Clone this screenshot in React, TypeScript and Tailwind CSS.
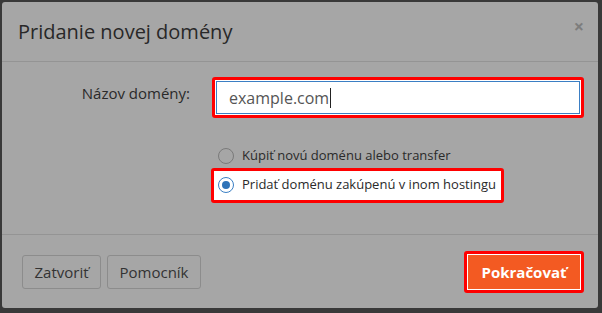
import React from "react";

const Radio = ({ checked }: { checked?: boolean }) => (
  <span
    className={`flex h-[16px] w-[16px] shrink-0 items-center justify-center rounded-full border ${
      checked ? "border-[#3b7fc4] bg-white" : "border-[#7a7a7a] bg-[#a6a6a6]"
    }`}
  >
    {checked && <span className="h-[8px] w-[8px] rounded-full bg-[#2f73b8]" />}
  </span>
);

const App = () => {
  return (
    <div
      className="h-[313px] w-[602px] bg-[#393939] pl-[2px] pt-[2px]"
      style={{ fontFamily: '"Open Sans", "Noto Sans", sans-serif' }}
    >
      <div className="flex h-[306px] w-[596px] flex-col rounded-[3px] bg-[#a6a6a6]">
        {/* HEADER */}
        <div className="flex h-[60px] items-center justify-between border-b border-[#949494] pl-[16px] pr-[14px]">
          <h1 className="text-[20px] text-[#282828]">Pridanie novej domény</h1>
          <span className="pb-[10px] text-[18px] font-bold text-[#7d7d7d]">×</span>
        </div>

        {/* BODY */}
        <div className="flex h-[173px] flex-col border-b border-[#949494] pt-[15px]">
          <div className="flex items-start">
            <label className="w-[188px] pt-[5px] text-right text-[15px] text-[#2a2a2a]">
              Názov domény:
            </label>
            <div className="ml-[22px] rounded-[3px] border-[3px] border-[#ff0000] bg-white p-[1px]">
              <div className="flex h-[33px] w-[364px] items-center border border-[#3b7fc4] bg-white pl-[12px] text-[16px] text-[#555]">
                example.com
                <span className="ml-[1px] h-[20px] w-px bg-[#222]" />
              </div>
            </div>
          </div>

          <div className="mt-[28px] flex flex-col pl-[209px]">
            <div className="flex items-center gap-[8px] whitespace-nowrap pl-[7px] text-[13px] text-[#2a2a2a]">
              <Radio />
              Kúpiť novú doménu alebo transfer
            </div>
            <div className="mt-[2px] w-[293px] rounded-[3px] border-[3px] border-[#ff0000] bg-white px-[1px] py-[1px]">
              <div className="flex h-[27px] items-center gap-[8px] whitespace-nowrap bg-white pl-[3px] text-[13px] text-[#2a2a2a]">
                <Radio checked />
                Pridať doménu zakúpenú v inom hostingu
              </div>
            </div>
          </div>
        </div>

        {/* FOOTER */}
        <div className="flex items-center justify-between pl-[20px] pr-[14px] pt-[16px]">
          <div className="flex gap-[6px]">
            <button className="h-[34px] w-[79px] rounded-[3px] border border-[#8c8c8c] text-[15px] text-[#333]">
              Zatvoriť
            </button>
            <button className="h-[34px] w-[94px] rounded-[3px] border border-[#8c8c8c] text-[15px] text-[#333]">
              Pomocník
            </button>
          </div>
          <div className="rounded-[3px] border-[3px] border-[#ff0000] bg-white p-[1px]">
            <button className="h-[34px] w-[112px] bg-[#f35a22] text-[15px] font-bold text-white">
              Pokračovať
            </button>
          </div>
        </div>
      </div>
    </div>
  );
};

export default App;
